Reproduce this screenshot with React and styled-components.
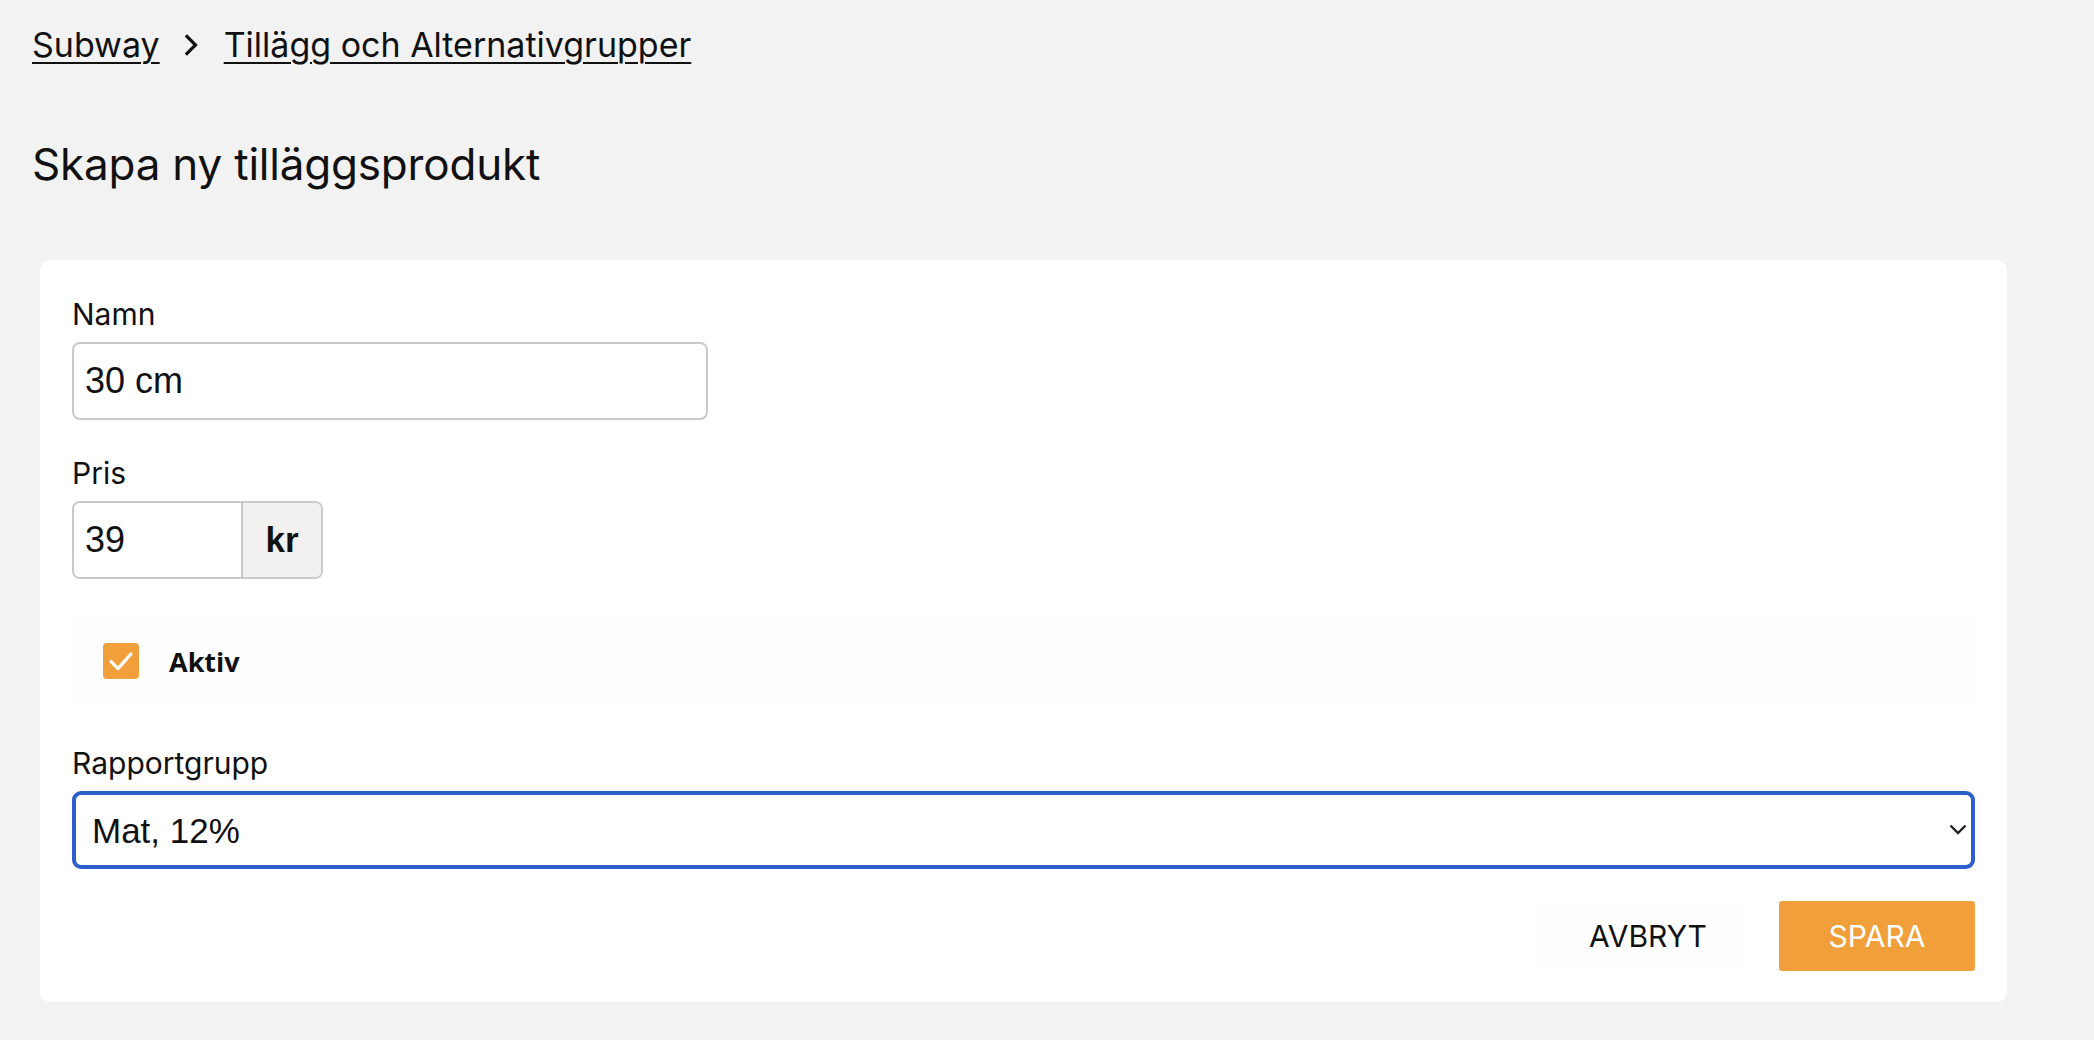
import React, { useState } from 'react';
import styled, { createGlobalStyle } from 'styled-components';

const GlobalStyle = createGlobalStyle`
  html, body {
    margin: 0;
    padding: 0;
    background: #f2f2f2;
  }
  body {
    font-family: Inter, "Noto Sans", "Liberation Sans", sans-serif;
    color: #111;
  }
  * {
    box-sizing: border-box;
  }
`;

function App() {
  const [name, setName] = useState('30 cm');
  const [price, setPrice] = useState('39');
  const [active, setActive] = useState(true);
  const [group, setGroup] = useState('mat12');

  return (
    <>
      <GlobalStyle />
      <Page>
        <Breadcrumb>
          <Crumb href="#">Subway</Crumb>
          <svg width="16" height="24" viewBox="0 0 16 24">
            <path
              d="M3 3.5 L11.5 12 L3 20.5"
              fill="none"
              stroke="#111"
              strokeWidth="3.2"
              strokeLinecap="square"
            />
          </svg>
          <Crumb href="#">Tillägg och Alternativgrupper</Crumb>
        </Breadcrumb>

        <Title>Skapa ny tilläggsprodukt</Title>

        <Card>
          <Field>
            <Label>Namn</Label>
            <TextInput
              value={name}
              onChange={(e) => setName(e.target.value)}
            />
          </Field>

          <Field $gap={34}>
            <Label>Pris</Label>
            <PriceGroup>
              <PriceInput
                value={price}
                onChange={(e) => setPrice(e.target.value)}
              />
              <Addon>kr</Addon>
            </PriceGroup>
          </Field>

          <CheckRow onClick={() => setActive(!active)}>
            <CheckBox $checked={active}>
              {active && (
                <svg width="28" height="28" viewBox="0 0 24 24">
                  <path
                    d="M3.5 12.5 L9.5 18.5 L20.5 6"
                    fill="none"
                    stroke="#fff"
                    strokeWidth="2.8"
                    strokeLinecap="round"
                    strokeLinejoin="round"
                  />
                </svg>
              )}
            </CheckBox>
            <CheckLabel>Aktiv</CheckLabel>
          </CheckRow>

          <Field $gap={32}>
            <Label>Rapportgrupp</Label>
            <SelectWrap>
              <Select value={group} onChange={(e) => setGroup(e.target.value)}>
                <option value="mat12">Mat, 12%</option>
                <option value="dryck25">Dryck, 25%</option>
              </Select>
              <Chevron width="18" height="11" viewBox="0 0 18 11">
                <path
                  d="M1.5 1.5 L9 9 L16.5 1.5"
                  fill="none"
                  stroke="#222"
                  strokeWidth="2.4"
                />
              </Chevron>
            </SelectWrap>
          </Field>

          <Actions>
            <Button>AVBRYT</Button>
            <Button $primary>SPARA</Button>
          </Actions>
        </Card>
      </Page>
    </>
  );
}

const Page = styled.div`
  padding: 20px 32px 38px 32px;
  min-height: 1040px;
`;

const Breadcrumb = styled.nav`
  display: flex;
  align-items: center;
  gap: 24px;
  height: 48px;
  svg {
    margin-top: 1px;
  }
`;

const Crumb = styled.a`
  font-size: 34px;
  color: #111;
  text-decoration: underline;
  text-decoration-thickness: 2px;
  text-underline-offset: 5px;
`;

const Title = styled.h1`
  margin: 71px 0 0 0;
  font-size: 44px;
  font-weight: 400;
  line-height: 50px;
  letter-spacing: -0.2px;
`;

const Card = styled.div`
  margin: 71px 0 0 8px;
  width: 1967px;
  background: #fff;
  border-radius: 10px;
  padding: 36px 32px 31px 32px;
  display: flex;
  flex-direction: column;
`;

const Field = styled.div`
  display: flex;
  flex-direction: column;
  margin-bottom: ${(props) => props.$gap || 35}px;
`;

const Label = styled.label`
  font-size: 30px;
  line-height: 36px;
  margin-bottom: 10px;
`;

const TextInput = styled.input`
  width: 636px;
  height: 78px;
  border: 2px solid #c9c9c9;
  border-radius: 8px;
  padding: 0 11px;
  font-family: "Liberation Sans", Arial, sans-serif;
  font-size: 36px;
  color: #111;
  outline: none;
`;

const PriceGroup = styled.div`
  display: flex;
  width: 251px;
  height: 78px;
  border: 2px solid #c9c9c9;
  border-radius: 8px;
  overflow: hidden;
`;

const PriceInput = styled.input`
  width: 169px;
  height: 100%;
  border: none;
  border-right: 2px solid #c9c9c9;
  padding: 0 11px;
  font-family: "Liberation Sans", Arial, sans-serif;
  font-size: 36px;
  color: #111;
  outline: none;
`;

const Addon = styled.div`
  flex: 1;
  display: flex;
  align-items: center;
  justify-content: center;
  background: #f2f1f0;
  font-family: "Liberation Sans", Arial, sans-serif;
  font-size: 35px;
  font-weight: 700;
`;

const CheckRow = styled.div`
  display: flex;
  align-items: center;
  height: 96px;
  padding-left: 31px;
  margin-bottom: 36px;
  background: #fefefe;
  border-radius: 6px;
  cursor: pointer;
`;

const CheckBox = styled.span`
  width: 36px;
  height: 36px;
  border-radius: 4px;
  background: ${(props) => (props.$checked ? '#f19f3b' : '#fff')};
  border: ${(props) => (props.$checked ? 'none' : '2px solid #c9c9c9')};
  display: flex;
  align-items: center;
  justify-content: center;
`;

const CheckLabel = styled.span`
  margin-left: 30px;
  font-family: "Open Sans", "Noto Sans", sans-serif;
  font-size: 27px;
  font-weight: 700;
  color: #111;
`;

const SelectWrap = styled.div`
  position: relative;
  width: 100%;
`;

const Select = styled.select`
  width: 100%;
  height: 78px;
  appearance: none;
  border: 4px solid #2c5fc9;
  border-radius: 9px;
  background: #fff;
  padding: 0 0 0 16px;
  font-family: "Liberation Sans", Arial, sans-serif;
  font-size: 35px;
  color: #111;
  outline: none;
`;

const Chevron = styled.svg`
  position: absolute;
  right: 8px;
  top: 33px;
  pointer-events: none;
`;

const Actions = styled.div`
  display: flex;
  justify-content: flex-end;
  gap: 36px;
`;

const Button = styled.button`
  height: 70px;
  padding: ${(props) => (props.$primary ? '0 48px' : '0 36px 0 56px')};
  min-width: ${(props) => (props.$primary ? '196px' : '0')};
  border: none;
  border-radius: 3px;
  background: ${(props) => (props.$primary ? '#f19f3b' : '#fefefe')};
  color: ${(props) => (props.$primary ? '#fff' : '#111')};
  font-family: inherit;
  font-size: 30px;
  font-weight: 400;
  cursor: pointer;
`;

export default App;
